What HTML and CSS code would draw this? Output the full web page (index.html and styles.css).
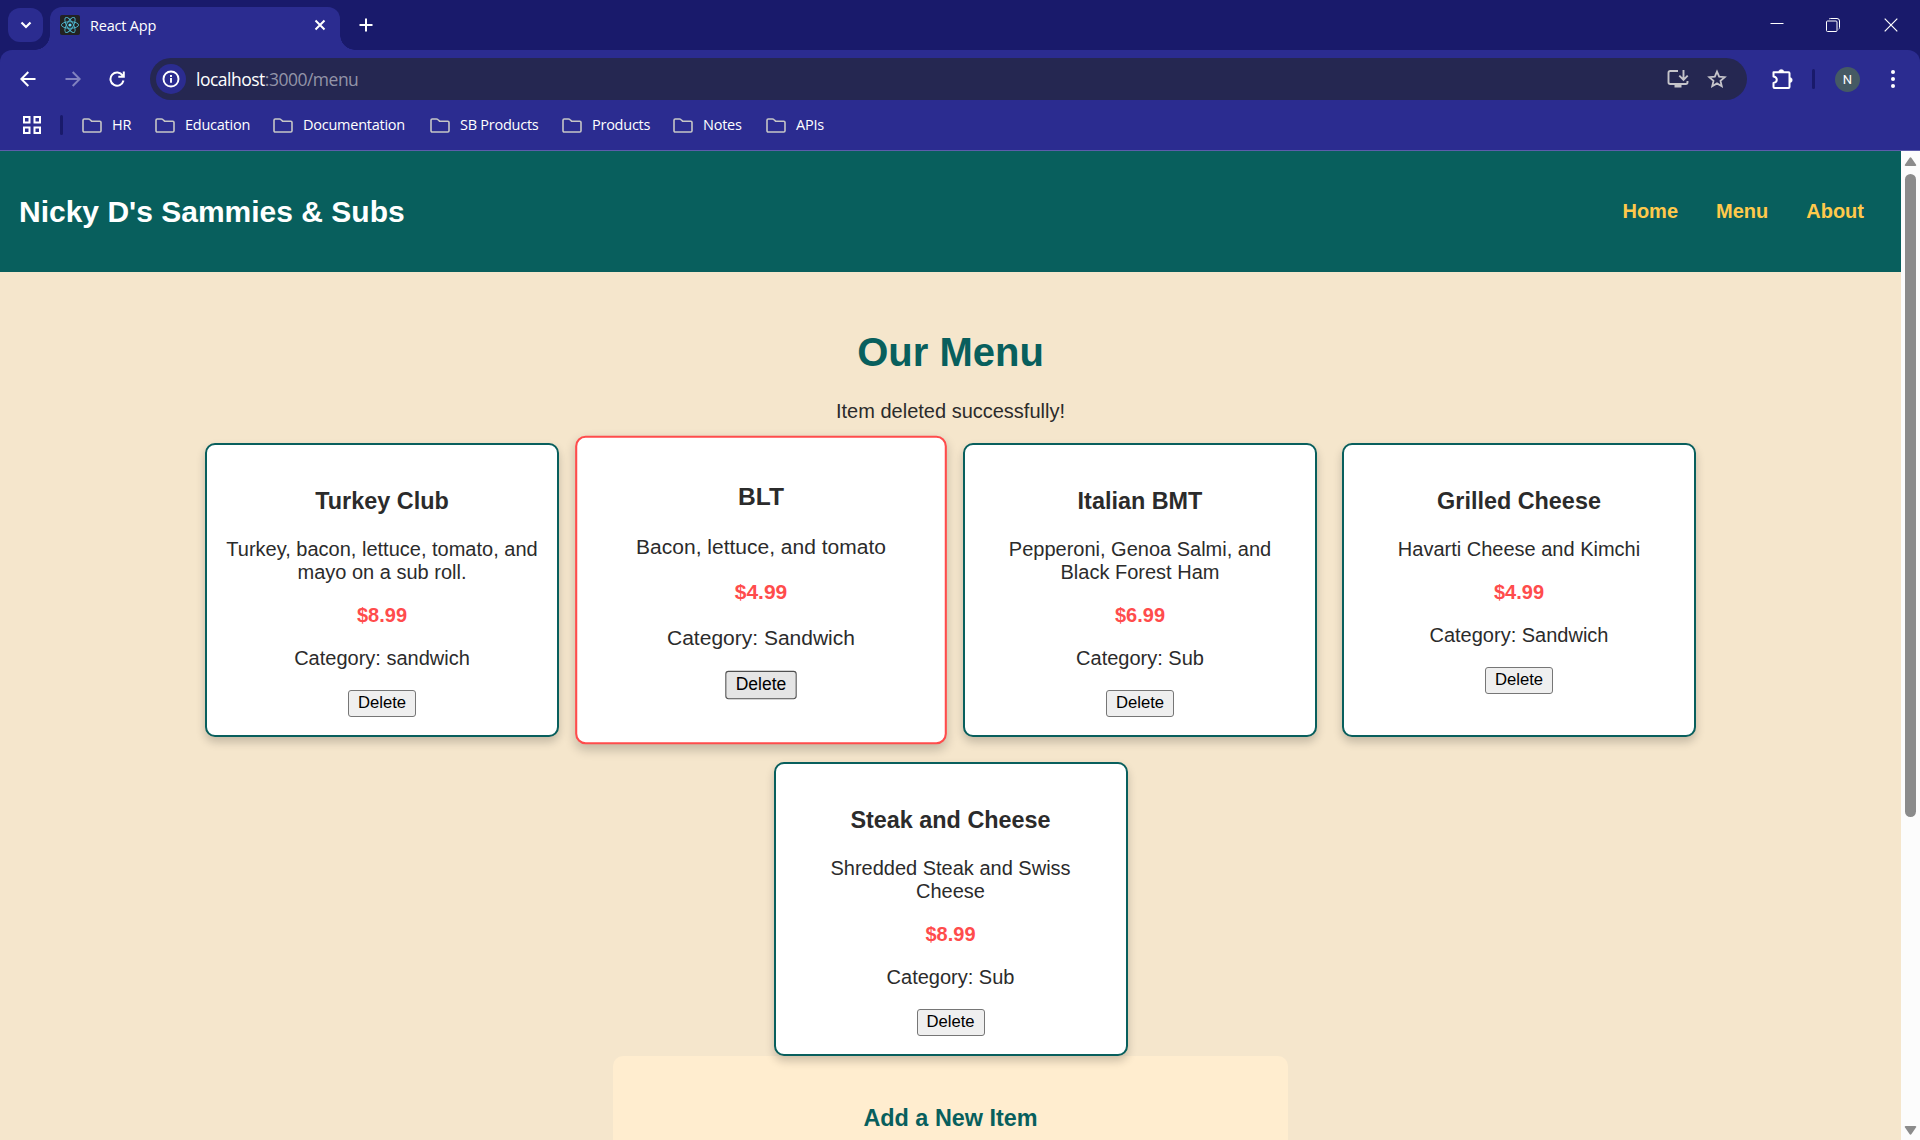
FILE: index.html
```html
<!DOCTYPE html>
<html lang="en">
<head>
<meta charset="utf-8">
<title>React App</title>
<link rel="stylesheet" href="styles.css">
</head>
<body>
<div class="tabstrip">
  <div class="tab-search"><svg width="12" height="8" viewBox="0 0 12 8" fill="none" stroke="#fff" stroke-width="2.2"><path d="M1.5 1.5 6 6l4.500-4.500"/></svg></div>
  <div class="tab">
    <svg class="favicon" width="20" height="20" viewBox="0 0 20 20"><rect width="20" height="20" rx="2" fill="#222"/><g fill="none" stroke="#4fb9d0" stroke-width="0.9"><ellipse cx="10" cy="10" rx="8.600" ry="3.300"/><ellipse cx="10" cy="10" rx="8.600" ry="3.300" transform="rotate(60 10 10)"/><ellipse cx="10" cy="10" rx="8.600" ry="3.300" transform="rotate(120 10 10)"/></g><circle cx="10" cy="10" r="1.600" fill="#61dafb"/></svg>
    <span class="tab-title">React App</span>
    <svg class="tab-close" width="12" height="12" viewBox="0 0 12 12" stroke="#fff" stroke-width="2"><path d="M1.500 1.500l9 9M10.500 1.500l-9 9"/></svg>
  </div>
  <svg class="new-tab" width="14" height="14" viewBox="0 0 14 14" stroke="#fff" stroke-width="2"><path d="M7 .5v13M.5 7h13"/></svg>
  <div class="window-controls">
    <svg width="14" height="14" viewBox="0 0 14 14" stroke="#fff"><path d="M.5 6.500h13"/></svg>
    <svg width="14" height="14" viewBox="0 0 14 14" fill="none" stroke="#fff"><rect x=".5" y="3" width="10.500" height="10.500" rx="1"/><path d="M3 1.200Q3.500.5 4.500.5h6.500q2.500 0 2.500 2.500v6.500q0 1.200-.8 1.600"/></svg>
    <svg width="14" height="14" viewBox="0 0 14 14" stroke="#fff" stroke-width="1.200"><path d="M.7.7l12.600 12.600M13.300.7.7 13.300"/></svg>
  </div>
</div>
<div class="toolbar">
  <div class="nav-icons">
    <svg width="16" height="16" viewBox="0 0 16 16" fill="none" stroke="#fff" stroke-width="2"><path d="M15.500 8H1.800M8.300 1 1.300 8l7 7"/></svg>
    <svg width="16" height="16" viewBox="0 0 16 16" fill="none" stroke="#8182bf" stroke-width="2"><path d="M.5 8h13.700M7.700 1l7 7-7 7"/></svg>
    <svg width="16" height="16" viewBox="0 0 16 16" fill="none" stroke="#fff" stroke-width="2"><path d="M13.600 4.500A6.600 6.600 0 1 0 14.500 9.600M14.800.5v5.200H9.300"/></svg>
  </div>
  <div class="omnibox">
    <div class="site-info"><svg width="18" height="18" viewBox="0 0 18 18" fill="none" stroke="#fff" stroke-width="1.900"><circle cx="9" cy="9" r="7.500"/><path d="M9 8v4.800M9 5v1.900"/></svg></div>
    <div class="url">localhost<span>:3000/menu</span></div>
    <svg class="install" width="22" height="20" viewBox="0 0 22 20" fill="none" stroke="#c5c4ca" stroke-width="1.900"><path d="M11 2H3.200Q1.500 2 1.500 3.700v9.600q0 1.700 1.700 1.700h15.600q1.700 0 1.700-1.700V12M16.500 1v9.500M12.300 6.700l4.200 4.200 4.200-4.200"/><path d="M7.500 15h7v3.500h-7z" fill="#c5c4ca" stroke="none"/></svg>
    <svg class="star" width="20" height="20" viewBox="0 0 20 20" fill="none" stroke="#c5c4ca" stroke-width="1.800"><path d="M10 2.600l2.150 5.100 5.550.48-4.200 3.660 1.260 5.400L10 14.400l-4.760 2.840 1.260-5.400-4.200-3.660 5.550-.48z"/></svg>
  </div>
  <svg class="puzzle" width="22" height="22" viewBox="0 0 22 22"><path d="M2.500 4.200h15q1 0 1 1V19q0 1-1 1h-14q-1 0-1-1v-4q3.300-.7 3.300-3.200t-3.300-3.200z" fill="none" stroke="#fff" stroke-width="2" stroke-linejoin="round"/><path d="M7.700 4a2.600 2.600 0 0 1 5.200 0zM18.700 9.400a2.600 2.600 0 0 1 0 5.200z" fill="#fff" stroke="#fff" stroke-width=".4"/></svg>
  <div class="divider"></div>
  <div class="avatar">N</div>
  <svg class="kebab" width="4" height="18" viewBox="0 0 4 18" fill="#fff"><circle cx="2" cy="2" r="2"/><circle cx="2" cy="9" r="2"/><circle cx="2" cy="16" r="2"/></svg>
</div>
<svg width="0" height="0" class="defs"><symbol id="folder" viewBox="0 0 20 15"><path d="M1 2.200Q1 1 2.200 1h4.300q.8 0 1.300.5L9.600 3.200h8.200Q19 3.200 19 4.400v8.400q0 1.200-1.200 1.200H2.200Q1 14 1 12.800z" fill="none" stroke="#c6c6c6" stroke-width="1.600"/></symbol></svg>
<div class="bookmarks">
  <svg class="apps" width="18" height="18" viewBox="0 0 18 18" fill="none" stroke="#fff" stroke-width="2"><path d="M1 1h5.500v5.500H1zM11.500 1H17v5.500h-5.500zM1 11.500h5.500V17H1zM11.500 11.500H17V17h-5.500z"/></svg>
  <div class="divider"></div>
  <div class="folders">
    <div class="folder hr"><svg><use href="#folder"/></svg>HR</div>
    <div class="folder education"><svg><use href="#folder"/></svg>Education</div>
    <div class="folder documentation"><svg><use href="#folder"/></svg>Documentation</div>
    <div class="folder sb"><svg><use href="#folder"/></svg>SB Products</div>
    <div class="folder products"><svg><use href="#folder"/></svg>Products</div>
    <div class="folder notes"><svg><use href="#folder"/></svg>Notes</div>
    <div class="folder apis"><svg><use href="#folder"/></svg>APIs</div>
  </div>
</div>
<div class="viewport">
  <div class="page">
    <header class="header">
      <h1>Nicky D's Sammies &amp; Subs</h1>
      <nav><a>Home</a><a>Menu</a><a>About</a></nav>
    </header>
    <main>
      <h2 class="title">Our Menu</h2>
      <p class="message">Item deleted successfully!</p>
      <div class="cards">
        <div class="card"><h3>Turkey Club</h3><p>Turkey, bacon, lettuce, tomato, and mayo on a sub roll.</p><p class="price">$8.99</p><p>Category: sandwich</p><button>Delete</button></div>
        <div class="card active"><h3>BLT</h3><p>Bacon, lettuce, and tomato</p><p class="price">$4.99</p><p>Category: Sandwich</p><button>Delete</button></div>
        <div class="card"><h3>Italian BMT</h3><p>Pepperoni, Genoa Salmi, and Black Forest Ham</p><p class="price">$6.99</p><p>Category: Sub</p><button>Delete</button></div>
        <div class="card"><h3>Grilled Cheese</h3><p>Havarti Cheese and Kimchi</p><p class="price">$4.99</p><p>Category: Sandwich</p><button>Delete</button></div>
        <div class="card"><h3>Steak and Cheese</h3><p>Shredded Steak and Swiss Cheese</p><p class="price">$8.99</p><p>Category: Sub</p><button>Delete</button></div>
      </div>
      <section class="add-form"><h3>Add a New Item</h3></section>
    </main>
  </div>
  <div class="scrollbar">
    <svg width="13" height="10" viewBox="0 0 13 10"><path d="M5.500 1Q6.500-.3 7.500 1L12 7.500q.8 1.500-.8 1.500H1.800Q.2 9 1 7.500z" fill="#8b8b8b"/></svg>
    <div class="thumb"></div>
    <svg class="down" width="13" height="10" viewBox="0 0 13 10"><path d="M5.500 9q1 1.300 2 0L12 2.500Q12.800 1 11.200 1H1.800Q.2 1 1 2.500z" fill="#8b8b8b"/></svg>
  </div>
</div>
</body>
</html>
```
FILE: styles.css
```css
* { box-sizing: border-box; }
body {
  margin: 0;
  width: 1920px;
  height: 1140px;
  overflow: hidden;
  background: #191a6b;
  font-family: "Liberation Sans", Arial, sans-serif;
}
svg { display: block; flex: none; }
.defs { position: absolute; }

/* Browser chrome */
.tabstrip, .toolbar, .bookmarks {
  display: flex;
  font-family: "Open Sans", "Noto Sans", sans-serif;
  color: #fff;
}
.tabstrip { height: 50px; padding-left: 8px; align-items: flex-start; }
.tab-search {
  width: 35px; height: 34px; margin: 8px 7px 0 0;
  border-radius: 12px; background: #2b2c90;
  display: flex; align-items: center; justify-content: center;
}
.tab {
  position: relative;
  width: 290px; height: 43px; margin-top: 7px; padding: 0 14px 7px 10px;
  display: flex; align-items: center;
  background: #2b2c90; border-radius: 12px 12px 0 0;
}
.tab::before, .tab::after {
  content: ""; position: absolute; bottom: 0; width: 15px; height: 15px;
}
.tab::before { left: -15px; background: radial-gradient(circle at 0 0, transparent 14.500px, #2b2c90 15px); }
.tab::after { right: -15px; background: radial-gradient(circle at 100% 0, transparent 14.500px, #2b2c90 15px); }
.tab-title { margin-left: 10px; font-size: 14.500px; letter-spacing: -0.200px; flex: 1; }
.new-tab { margin: 18px 0 0 19px; }
.window-controls { display: flex; gap: 43px; margin: 17px 22px 0 auto; }
.window-controls svg:nth-child(1) { margin-right: -1px; }
.window-controls svg:nth-child(2) { margin: 1px 1px 0 0; }
.window-controls svg:nth-child(3) { margin-top: 1px; }

.toolbar {
  height: 58px; align-items: center;
  background: #2b2c90; border-radius: 12px 12px 0 0;
}
.nav-icons { display: flex; gap: 29px; width: 150px; padding-left: 20px; }
.nav-icons svg:nth-child(2) { margin-right: -1px; }
.omnibox {
  width: 1597px; height: 42px; border-radius: 21px; background: #252751;
  display: flex; align-items: center; padding-left: 6px;
}
.site-info {
  width: 30px; height: 30px; border-radius: 50%; background: #2b2c90;
  display: flex; align-items: center; justify-content: center;
}
.url { margin-left: 10px; flex: 1; font-size: 17.500px; line-height: 24px; letter-spacing: -0.500px; }
.url span { color: #9394a8; }
.install { margin-right: 18px; }
.star { margin-right: 20px; }
.puzzle { margin-left: 24px; }
.toolbar .divider { margin: 0 20px 0 19px; }
.divider { width: 3px; height: 20px; border-radius: 2px; background: #191a6b; }
.avatar {
  width: 25px; height: 25px; border-radius: 50%; background: #455a64;
  font: 13px/25px Roboto, sans-serif; text-align: center;
}
.kebab { margin-left: 31px; }

.bookmarks {
  height: 43px; padding: 0 0 8px 23px; align-items: center;
  background: #2b2c90; border-bottom: 1px solid #5d5cab;
}
.bookmarks .divider { margin: 0 19px; }
.folders { display: flex; }
.folder {
  display: flex; align-items: center; gap: 10px;
  font-size: 14.500px; line-height: 20px; letter-spacing: -0.250px; white-space: nowrap;
}
.folder svg { width: 20px; height: 15px; }
.hr { width: 73px; }
.education { width: 118px; }
.documentation { width: 157px; }
.sb { width: 132px; }
.products { width: 111px; }
.notes { width: 93px; }

/* Page */
.viewport { display: flex; height: 989px; overflow: hidden; }
.page { width: 1901px; background: #f5e6cc; color: #2b2b2b; }
.header {
  height: 121px; padding: 0 37px 0 19px;
  display: flex; align-items: center; justify-content: space-between;
  background: #085f5d;
}
.header h1 { margin: 0; font-size: 30px; line-height: 34px; color: #fff; }
.header nav { display: flex; gap: 38px; }
.header a { font-size: 20px; line-height: 23px; font-weight: bold; color: #ffc94b; }
main { padding-top: 57px; text-align: center; }
.title { margin: 0 0 25px; font-size: 40px; line-height: 46px; color: #085f5d; }
.message { margin: 0 0 20px; font-size: 20px; line-height: 23px; }
.cards {
  position: relative; z-index: 1; padding: 0 125px;
  display: flex; flex-wrap: wrap; justify-content: center; gap: 25px;
}
.card {
  width: 354px; height: 294px; padding: 18px 18.750px;
  border: 2px solid #085f5d; border-radius: 10px; background: #fff;
  box-shadow: 0 5px 10px rgba(0, 0, 0, 0.200);
}
.card.active { transform: scale(1.05); border-color: #ff4c4c; }
h3 { margin: 25px 0 23px; font-size: 23.400px; line-height: 27px; }
.card p { margin: 0 0 20px; font-size: 20px; line-height: 23px; }
.card .price { font-weight: bold; color: #ff4c4c; }
button {
  display: block; width: 68px; height: 27px; margin: 0 auto; padding: 0 0 2px;
  border: 1px solid #767676; border-radius: 3px; background: #efefef;
  font: 16.670px/23px "Liberation Sans", Arial, sans-serif; color: #000;
}
.active button { background: #e5e5e5; border-color: #4f4f4f; }
.add-form {
  width: 675px; height: 400px; margin: 0 auto; padding-top: 24px;
  border-radius: 10px; background: #ffedcf;
}
.add-form h3 { color: #085f5d; }

.scrollbar {
  width: 19px; background: #fcfcfc; padding-top: 6px;
  display: flex; flex-direction: column; align-items: center;
}
.thumb { width: 11px; height: 643px; margin-top: 7px; border-radius: 6px; background: #8b8b8b; }
.down { margin-top: auto; margin-bottom: 5px; }
```
